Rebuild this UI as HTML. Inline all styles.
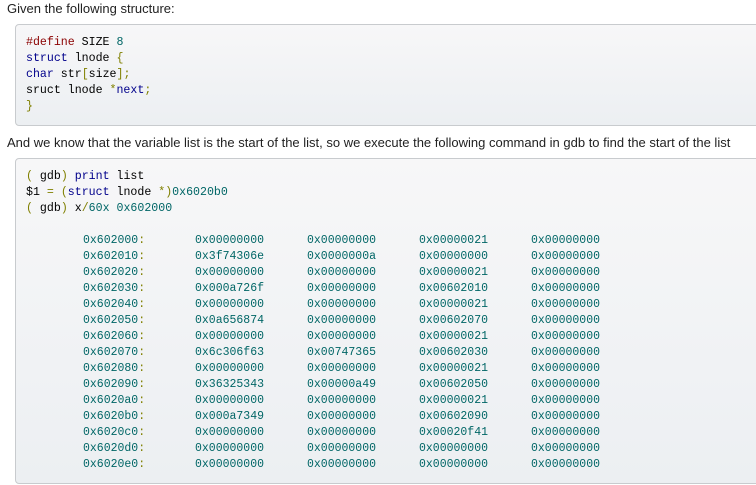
<!DOCTYPE html>
<html><head><style>
body{margin:0;background:#fff;width:756px;height:485px;overflow:hidden;position:relative;font-family:"Liberation Sans",sans-serif;}
.p{position:absolute;left:7px;font-size:13px;color:#222;line-height:15px;}
.box{position:absolute;left:15px;width:760px;border:1px solid #c8cbce;border-radius:4px;background:linear-gradient(#f7f7f8,#eceff2);box-sizing:border-box;}
.code{position:absolute;left:26px;font-family:"Liberation Mono",monospace;font-size:11.6px;line-height:16px;color:#000;white-space:pre;}
.kw{color:#00008b}.pp{color:#8b0000}.n{color:#006666}.pu{color:#808000}
.r{position:absolute;font-family:"Liberation Mono",monospace;font-size:11.5px;color:#006666;line-height:16px;white-space:pre;}
</style></head><body>
<div class="p" style="top:1px">Given the following structure:</div>
<div class="box" style="top:24px;height:102px"></div>
<div class="code" style="top:35px"><span class="pp">#define</span> SIZE <span class="n">8</span>
<span class="kw">struct</span> lnode <span class="pu">{</span>
<span class="kw">char</span> str<span class="pu">[</span>size<span class="pu">];</span>
sruct lnode <span class="pu">*</span><span class="kw">next</span><span class="pu">;</span>
<span class="pu">}</span></div>
<div class="p" style="top:135px">And we know that the variable list is the start of the list, so we execute the following command in gdb to find the start of the list</div>
<div class="box" style="top:158px;height:326px"></div>
<div class="code" style="top:169px"><span class="pu">(</span> gdb<span class="pu">)</span> <span class="kw">print</span> list
$1 <span class="pu">=</span> <span class="pu">(</span><span class="kw">struct</span> lnode <span class="pu">*)</span><span class="n">0x6020b0</span>
<span class="pu">(</span> gdb<span class="pu">)</span> x<span class="pu">/</span><span class="n">60x</span> <span class="n">0x602000</span></div>
<div id="rows"></div>
<script>
var d=[["0x602000","0x00000000","0x00000000","0x00000021","0x00000000"],
["0x602010","0x3f74306e","0x0000000a","0x00000000","0x00000000"],
["0x602020","0x00000000","0x00000000","0x00000021","0x00000000"],
["0x602030","0x000a726f","0x00000000","0x00602010","0x00000000"],
["0x602040","0x00000000","0x00000000","0x00000021","0x00000000"],
["0x602050","0x0a656874","0x00000000","0x00602070","0x00000000"],
["0x602060","0x00000000","0x00000000","0x00000021","0x00000000"],
["0x602070","0x6c306f63","0x00747365","0x00602030","0x00000000"],
["0x602080","0x00000000","0x00000000","0x00000021","0x00000000"],
["0x602090","0x36325343","0x00000a49","0x00602050","0x00000000"],
["0x6020a0","0x00000000","0x00000000","0x00000021","0x00000000"],
["0x6020b0","0x000a7349","0x00000000","0x00602090","0x00000000"],
["0x6020c0","0x00000000","0x00000000","0x00020f41","0x00000000"],
["0x6020d0","0x00000000","0x00000000","0x00000000","0x00000000"],
["0x6020e0","0x00000000","0x00000000","0x00000000","0x00000000"]];
var x=[83,195,307,419,531],h="";
d.forEach(function(r,i){r.forEach(function(c,j){h+='<div class="r" style="top:'+(233+i*16)+'px;left:'+x[j]+'px">'+c+(j==0?'<span class="pu">:</span>':'')+'</div>';});});
document.getElementById("rows").innerHTML=h;
</script>
</body></html>
